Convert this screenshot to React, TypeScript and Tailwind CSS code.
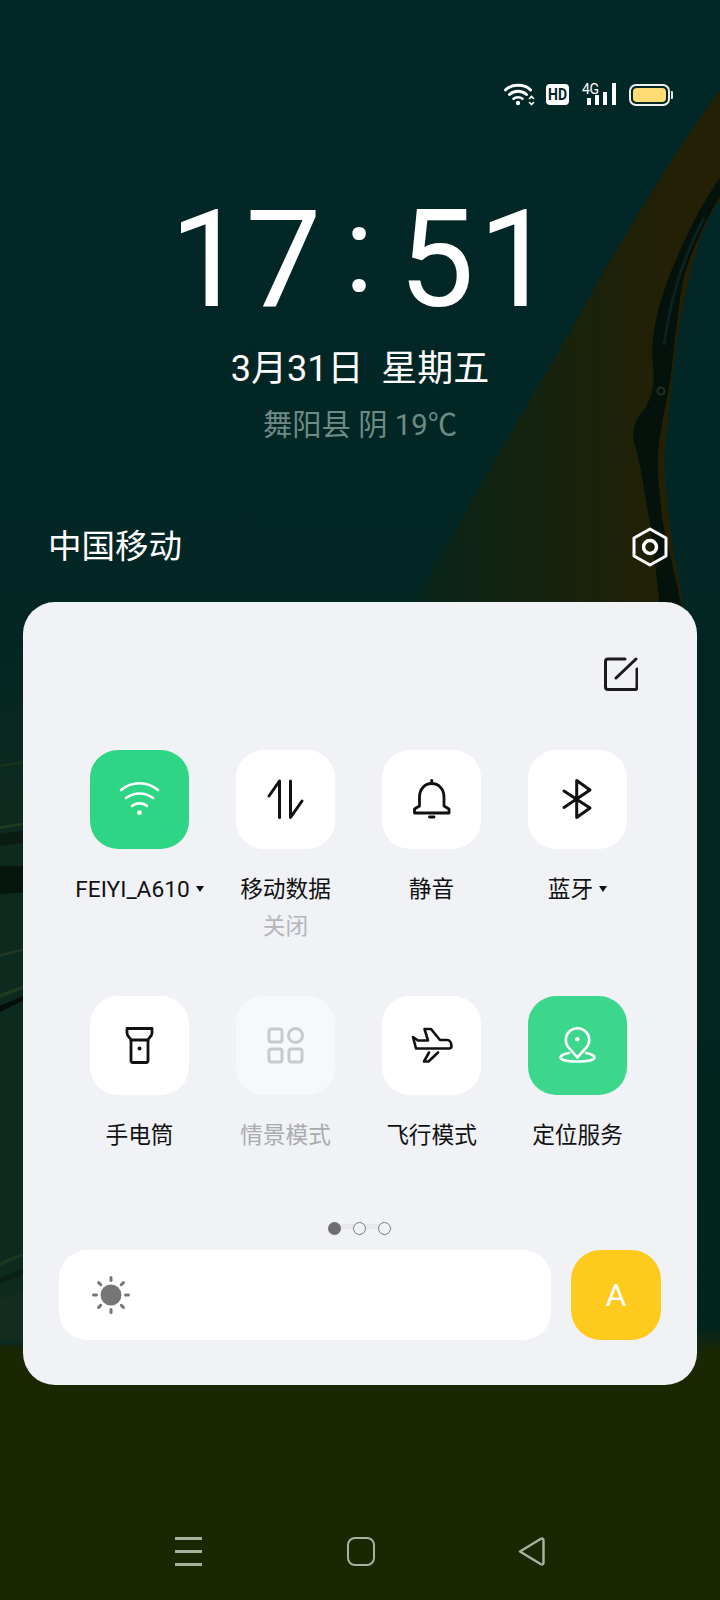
import type { ReactNode } from 'react';

const fontStack = "font-['Roboto','Noto_Sans_CJK_SC',sans-serif]";

function Wallpaper() {
    return (
        <svg className="absolute inset-0 h-full w-full" viewBox="0 0 720 1600" fill="none">
            <defs>
                <linearGradient id="band" x1="420" y1="0" x2="670" y2="0" gradientUnits="userSpaceOnUse">
                    <stop offset="0" stopColor="#08241a" />
                    <stop offset="0.6" stopColor="#19230c" />
                    <stop offset="1" stopColor="#232005" />
                </linearGradient>
                <linearGradient id="leftFade" x1="0" y1="640" x2="0" y2="800" gradientUnits="userSpaceOnUse">
                    <stop offset="0" stopColor="#0d2a1f" stopOpacity="0" />
                    <stop offset="1" stopColor="#0d2a1f" />
                </linearGradient>
            </defs>
            {/* brown band */}
            <path d="M720 90 C680 145 620 240 574 325 C530 400 470 500 413 610 L684 610 C678 570 672 550 670 524 C667 500 664 475 665 453 C667 425 670 400 672 381 C675 360 677 340 680 320 C684 300 690 270 700 240 C705 225 712 212 720 200 Z" fill="url(#band)" />
            {/* dark branch */}
            <path d="M720 178 C700 205 675 255 660 303 C654 325 651 345 653 365 C655 385 652 395 646 407 C636 418 631 430 634 442 C640 460 645 495 650 524 C654 555 658 585 660 610 L682 610 C676 575 668 550 663 524 C660 500 657 475 658 453 C660 430 666 405 670 381 C674 355 676 320 683 281 C688 260 700 231 720 196 Z" fill="#05120c" />
            <path d="M704 218 C684 255 670 300 664 345" stroke="#0c2220" strokeWidth="3" />
            <circle cx="661" cy="391" r="3.5" stroke="#1b3322" strokeWidth="2" />
            {/* left edge, behind the panel */}
            <rect x="0" y="640" width="30" height="705" fill="url(#leftFade)" />
            <g opacity="0.75">
                <path d="M0 765 L30 760 L30 762 L0 767 Z" fill="#1d3a17" />
                <path d="M0 826 L30 822 L30 824 L0 829 Z" fill="#27431f" />
                <path d="M0 834 L30 830 L30 842 L0 846 Z" fill="#08160f" />
                <path d="M0 866 L30 866 L30 892 L0 894 Z" fill="#031009" />
                <path d="M0 954 L30 947 L30 949 L0 957 Z" fill="#2b3d24" />
                <path d="M0 994 L30 983 L30 986 L0 998 Z" fill="#24401f" />
                <path d="M0 1006 L30 993 L30 997 L0 1012 Z" fill="#020705" />
                <path d="M0 1262 L30 1250 L30 1253 L0 1266 Z" fill="#1d3f1e" />
                <path d="M0 1278 L30 1266 L30 1272 L0 1284 Z" fill="#0a1d10" />
                <path d="M0 1300 L30 1290 L30 1340 L0 1340 Z" fill="#172f1c" />
            </g>
        </svg>
    );
}

function StatusIcons() {
    return (
        <div className="flex items-center justify-end pr-[47px] h-[23px]">
            <svg className="w-[31px] h-[23px]" viewBox="0 0 31 23" fill="none" stroke="#fff" strokeLinecap="round">
                <path d="M1.5 7 C7.5 0.8 20.5 0.8 26.5 7" strokeWidth="3" />
                <path d="M5.5 11.5 C10 7.3 18 7.3 22.5 11.5" strokeWidth="3" />
                <path d="M9.5 15.8 C12 13.8 16 13.8 18.5 15.8" strokeWidth="2.6" />
                <circle cx="14" cy="20" r="2.2" fill="#fff" stroke="none" />
                <path d="M25.5 15.5 L27.5 13.5 L29.5 15.5 M25.5 19.5 L27.5 21.5 L29.5 19.5" strokeWidth="1.6" />
            </svg>
            <div className="ml-[11px] flex h-[21px] w-[23px] items-center justify-center rounded-[4px] bg-white">
                <span className="scale-x-[0.82] font-['Roboto',sans-serif] text-[17px] font-bold leading-none text-[#02262a]">HD</span>
            </div>
            <div className="relative ml-[13px] h-[23px] w-[34px]">
                <span className="absolute left-0 top-[-2px] font-['Roboto',sans-serif] text-[14px] leading-[16px] text-white tracking-[-0.3px]">4G</span>
                <div className="absolute bottom-[1px] left-[5px] h-[7px] w-[3.5px] bg-white" />
                <div className="absolute bottom-[1px] left-[13px] h-[10px] w-[3.5px] bg-white" />
                <div className="absolute bottom-[1px] left-[21px] h-[13px] w-[4px] bg-white" />
                <div className="absolute bottom-[1px] left-[30px] h-[22px] w-[4px] bg-white" />
            </div>
            <div className="ml-[13px] flex items-center">
                <div className="h-[22px] w-[41px] rounded-[7px] border-2 border-[#eef2ee] p-[2px]">
                    <div className="h-full w-full rounded-[4px] bg-[#ffdc73]" />
                </div>
                <div className="ml-[1px] h-[8px] w-[2px] rounded-r-[1px] bg-[#dfe5e0]" />
            </div>
        </div>
    );
}

function Caret() {
    return <span className="ml-[6px] mb-[3px] inline-block h-0 w-0 border-x-[4.5px] border-t-[6px] border-x-transparent border-t-[#111]" />;
}

interface Tool {
    label: string;
    sub?: string;
    caret?: boolean;
    bg: string;
    labelClass?: string;
    icon: ReactNode;
}

const dark = { fill: 'none', stroke: '#111', strokeWidth: 3, strokeLinecap: 'round', strokeLinejoin: 'round' } as const;
const light = { fill: 'none', stroke: '#fff', strokeWidth: 2.6, strokeLinecap: 'round', strokeLinejoin: 'round' } as const;

const tools: Tool[] = [
    {
        label: 'FEIYI_A610',
        caret: true,
        bg: 'bg-[#2dd584]',
        icon: (
            <g {...light}>
                <path d="M31 40 C42 31 57 31 68 40" />
                <path d="M36 48 C44 42 55 42 63 48" />
                <path d="M42 56 C46 52.5 53 52.5 57 56" />
                <circle cx="49.5" cy="62.7" r="2.4" fill="#fff" stroke="none" />
            </g>
        ),
    },
    {
        label: '移动数据',
        sub: '关闭',
        bg: 'bg-white',
        icon: (
            <g {...dark}>
                <path d="M33 46 L43.5 31 V67.5" />
                <path d="M66 51 L54.5 67.5 V31" />
            </g>
        ),
    },
    {
        label: '静音',
        bg: 'bg-white',
        icon: (
            <g {...dark} strokeWidth="2.8">
                <path d="M37.5 56 V47 C37.5 39 43 33.5 49.7 33.5 C56.5 33.5 62 39 62 47 V56 L67 59 V63 H32.5 V59 Z" />
                <path d="M49.7 30.5 V33" />
                <path d="M47.5 67 H52" />
            </g>
        ),
    },
    {
        label: '蓝牙',
        caret: true,
        bg: 'bg-white',
        icon: <path {...dark} d="M36 41 L62 58 L48.7 67.5 V30.5 L62 40 L36 57.5" />,
    },
    {
        label: '手电筒',
        bg: 'bg-white',
        icon: (
            <g {...dark} strokeWidth="2.8">
                <path d="M37 32.5 H62 V37 C62 41 58 42 58 44 H41 C41 42 37 41 37 37 Z" />
                <path d="M41 44 V64.5 C41 65.8 42 66.5 43 66.5 H56 C57 66.5 58 65.8 58 64.5 V44" />
                <circle cx="49.5" cy="52.5" r="2" fill="#111" stroke="none" />
            </g>
        ),
    },
    {
        label: '情景模式',
        bg: 'bg-[#f7f8fa]',
        labelClass: 'text-[#a9abaf]',
        icon: (
            <g fill="none" stroke="#c8c9cc" strokeWidth="3">
                <rect x="33" y="33" width="13" height="13" rx="2.5" />
                <circle cx="59.5" cy="39.5" r="7" />
                <rect x="33" y="53" width="13" height="13" rx="2.5" />
                <rect x="53" y="53" width="13" height="13" rx="2.5" />
            </g>
        ),
    },
    {
        label: '飞行模式',
        bg: 'bg-white',
        icon: (
            <g {...dark} strokeWidth="2.6">
                <path d="M31 41 L36 44.5 H46 L42.5 33 H49 L58 44 H65 C68 44 69.5 47 69.5 50 C69.5 51.5 68.5 52.5 67 52.5 H34 Z" />
                <path d="M47 56.5 L42 65.5 H46.5 L56 56.5" />
            </g>
        ),
    },
    {
        label: '定位服务',
        bg: 'bg-[#3cd68c]',
        icon: (
            <g {...light}>
                <path d="M49.3 61.5 L41.5 52.5 A11.7 11.7 0 1 1 57.5 52.5 Z" />
                <circle cx="49.3" cy="43.3" r="2.2" fill="#fff" stroke="none" />
                <path d="M41 57 C35 58 32.5 60 32.5 61.5 C32.5 64 40 65.5 49.5 65.5 C59 65.5 66.5 64 66.5 61.5 C66.5 60 64 58 58 57" />
            </g>
        ),
    },
];

function ToolCell({ tool }: { tool: Tool }) {
    return (
        <div className="flex flex-col items-center">
            <div className={`h-[99px] w-[99px] rounded-[28px] ${tool.bg}`}>
                <svg className="h-[99px] w-[99px]" viewBox="0 0 99 99">
                    {tool.icon}
                </svg>
            </div>
            <div className={`mt-[24px] flex h-[34px] items-center text-[22.7px] leading-[34px] text-[#111] ${tool.labelClass ?? ''}`}>
                {tool.label}
                {tool.caret && <Caret />}
            </div>
            {tool.sub && <div className="mt-[3px] text-[22.7px] leading-[34px] text-[#b3b5b9]">{tool.sub}</div>}
        </div>
    );
}

function SunIcon() {
    const rays = [0, 45, 90, 135, 180, 225, 270, 315];
    return (
        <svg className="h-[38px] w-[38px]" viewBox="0 0 38 38">
            <circle cx="19" cy="19" r="10.5" fill="#767676" />
            {rays.map((r) => (
                <line key={r} x1="19" y1="1.5" x2="19" y2="4.5" stroke="#767676" strokeWidth="3" strokeLinecap="round" transform={`rotate(${r} 19 19)`} />
            ))}
        </svg>
    );
}

function NavBar() {
    return (
        <div className="absolute bottom-[34px] left-0 flex w-full justify-between pl-[175px] pr-[175px]">
            <div className="flex h-[29px] w-[27px] flex-col justify-between">
                <div className="h-[3px] bg-[#a9b09d]" />
                <div className="h-[3px] bg-[#a9b09d]" />
                <div className="h-[3px] bg-[#a9b09d]" />
            </div>
            <div className="ml-[2px] h-[29px] w-[28px] rounded-[8px] border-[2.5px] border-[#a9b09d]" />
            <svg className="h-[29px] w-[27px]" viewBox="0 0 27 29" fill="none">
                <path d="M2 14.5 L22.5 2 C24.5 1 25.5 2 25.5 3.5 V25.5 C25.5 27 24.5 28 22.5 27 Z" stroke="#a9b09d" strokeWidth="2.5" strokeLinejoin="round" />
            </svg>
        </div>
    );
}

export default function App() {
    return (
        <div className={`relative h-[1600px] w-[720px] overflow-hidden bg-linear-to-b from-[#022727] from-10% via-[#03241c] via-[83%] to-[#1a2703] to-[84.5%] ${fontStack}`}>
            <Wallpaper />
            <div className="relative pt-[83px]">
                <StatusIcons />

                <div className="mt-[80px] flex h-[148px] items-center justify-center pl-[8px] text-[135px] leading-[148px] text-white">
                    <span>17</span>
                    <span className="ml-[23px] mr-[25px] mb-[21px] text-[120px]">:</span>
                    <span className="tracking-[4px]">51</span>
                </div>

                <div className="mt-[13px] text-center text-[36px] leading-[44px] text-white whitespace-pre">3月31日  星期五</div>
                <div className="mt-[12px] text-center text-[29.3px] leading-[44px] text-[#6e8a84]">舞阳县 阴 19℃</div>

                <div className="mt-[77px] flex h-[46px] items-center justify-between pl-[48px] pr-[51px]">
                    <span className="text-[33.5px] leading-[46px] text-white">中国移动</span>
                    <svg className="h-[40px] w-[38px]" viewBox="0 0 38 40" fill="none" stroke="#fff">
                        <path d="M19 2 L35 11 V29 L19 38 L3 29 V11 Z" strokeWidth="3" strokeLinejoin="round" />
                        <circle cx="19" cy="20" r="6.5" strokeWidth="3.5" />
                    </svg>
                </div>

                <div className="mx-[23px] mt-[32px] w-[674px] rounded-[32px] bg-[#f0f2f6] pb-[45px] pt-[55px]">
                    <div className="flex justify-end pr-[59px]">
                        <svg className="h-[34px] w-[34px]" viewBox="0 0 34 34" fill="none" stroke="#1a1a1a" strokeWidth="3" strokeLinecap="round" strokeLinejoin="round">
                            <path d="M21 2 H4 C2.5 2 1.5 3 1.5 4.5 V30 C1.5 31.5 2.5 32.5 4 32.5 H31 C32.5 32.5 33 31.5 33 30 V12" />
                            <path d="M12 21 L32 2" />
                        </svg>
                    </div>

                    <div className="mt-[59px] grid grid-cols-[repeat(4,146px)] grid-rows-[246px_226px] pl-[43.5px]">
                        {tools.map((tool) => (
                            <ToolCell key={tool.label} tool={tool} />
                        ))}
                    </div>

                    <div className="relative ml-[305px] flex h-[13px] w-[63px] justify-between">
                        <div className="absolute left-[6px] top-[2px] h-[5px] w-[50px] bg-[#e7e8eb]" />
                        <div className="relative h-[13px] w-[13px] rounded-full bg-[#6e6e6e]" />
                        <div className="relative h-[13px] w-[13px] rounded-full border border-[#7c7c7c] bg-[#f0f2f6]" />
                        <div className="relative h-[13px] w-[13px] rounded-full border border-[#7c7c7c] bg-[#f0f2f6]" />
                    </div>

                    <div className="mt-[15px] flex gap-[20px] pl-[36px]">
                        <div className="flex h-[90px] w-[492px] items-center rounded-[28px] bg-white pl-[33px]">
                            <SunIcon />
                        </div>
                        <div className="flex h-[90px] w-[90px] items-center justify-center rounded-[30px] bg-[#ffca1e] text-[32px] font-[450] text-white">
                            A
                        </div>
                    </div>
                </div>
            </div>
            <NavBar />
        </div>
    );
}
